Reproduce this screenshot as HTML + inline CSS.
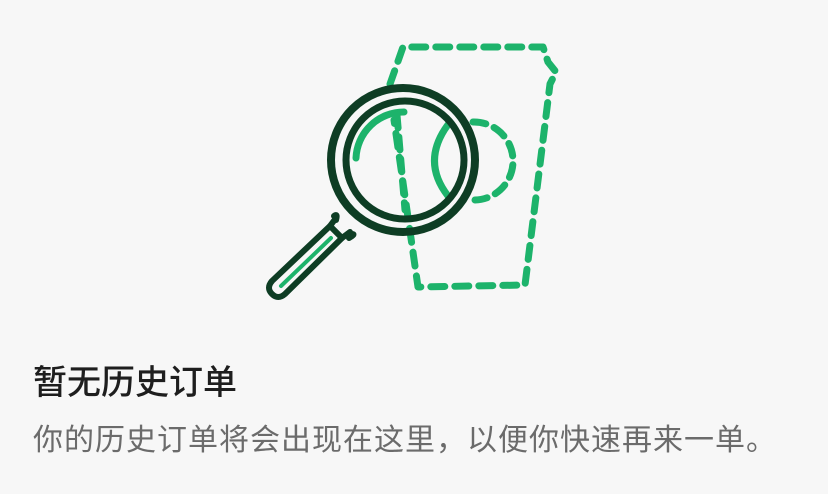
<!DOCTYPE html>
<html><head><meta charset="utf-8"><style>
html,body{margin:0;padding:0;}
body{width:828px;height:494px;background:#f7f7f7;position:relative;overflow:hidden;font-family:"Liberation Sans","Noto Sans CJK SC",sans-serif;}
.t{position:absolute;left:33px;top:362px;font-size:34px;font-weight:500;color:#1e1e1e;line-height:42px;white-space:nowrap;}
.s{position:absolute;left:33px;top:422px;font-size:30px;letter-spacing:1px;color:#6b6b6b;line-height:38px;white-space:nowrap;}
svg{position:absolute;left:0;top:0;}
</style></head><body>
<svg width="828" height="494" viewBox="0 0 828 494">
<g fill="none" stroke="#1db36b" stroke-width="7" stroke-linecap="round" stroke-linejoin="round">
<path d="M390 84 L403 47 L543 47 L548 62 L556 72 L550 84 L525 285 L418 287 L394 120" stroke-dasharray="14 10"/>
<path d="M473 122 A38 38 0 0 1 475 200" stroke-dasharray="13 9"/>
<path d="M450 122 Q420 160 448 196"/>
<path d="M356 158 A48 48 0 0 1 404 112"/>
<path d="M397 115 L405 210" stroke-dasharray="13 9"/>
</g>
<g fill="none" stroke="#0e3d24" stroke-linecap="round" stroke-linejoin="round">
<circle cx="403" cy="160" r="72" stroke-width="8"/>
<circle cx="405" cy="160" r="59" stroke-width="7"/>
<path d="M330 226 L342 238 L285 294 Q278 300 272 294 Q266 288 272 281 Z" stroke-width="6"/>
<path d="M330 226 L336 218 M342 238 L350 232 M334 216 Q338 213 336 220 M352 234 Q356 234 349 238" stroke-width="6"/>
</g>
<path d="M331 238 L281 286" stroke="#1db36b" stroke-width="4" stroke-linecap="round"/>
</svg>
<div class="t">暂无历史订单</div>
<div class="s">你的历史订单将会出现在这里，以便你快速再来一单。</div>
</body></html>
